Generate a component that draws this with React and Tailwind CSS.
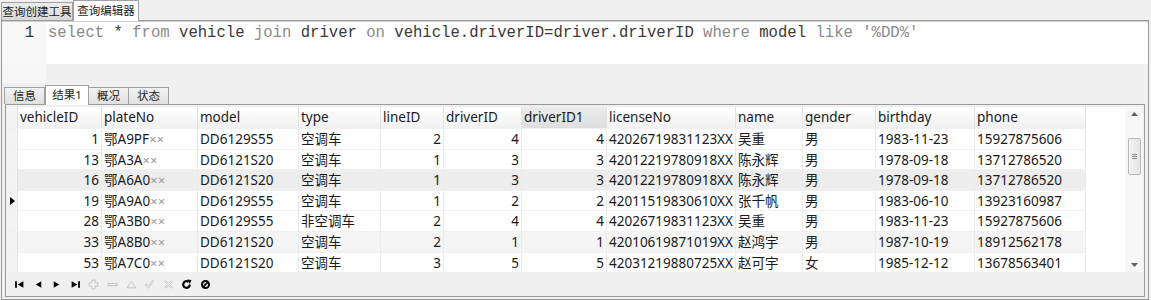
import React from "react";

const cols = [
  { key: "vehicleID", w: 84, right: true },
  { key: "plateNo", w: 96 },
  { key: "model", w: 101 },
  { key: "type", w: 82 },
  { key: "lineID", w: 63, right: true },
  { key: "driverID", w: 78, right: true },
  { key: "driverID1", w: 85, right: true },
  { key: "licenseNo", w: 129 },
  { key: "name", w: 67 },
  { key: "gender", w: 73 },
  { key: "birthday", w: 99 },
  { key: "phone", w: 111 },
];

const rows = [
  ["1", "鄂A9PF", "DD6129S55", "空调车", "2", "4", "4", "42026719831123XX", "吴重", "男", "1983-11-23", "15927875606"],
  ["13", "鄂A3A", "DD6121S20", "空调车", "1", "3", "3", "42012219780918XX", "陈永辉", "男", "1978-09-18", "13712786520"],
  ["16", "鄂A6A0", "DD6121S20", "空调车", "1", "3", "3", "42012219780918XX", "陈永辉", "男", "1978-09-18", "13712786520"],
  ["19", "鄂A9A0", "DD6129S55", "空调车", "1", "2", "2", "42011519830610XX", "张千帆", "男", "1983-06-10", "13923160987"],
  ["28", "鄂A3B0", "DD6129S55", "非空调车", "2", "4", "4", "42026719831123XX", "吴重", "男", "1983-11-23", "15927875606"],
  ["33", "鄂A8B0", "DD6121S20", "空调车", "2", "1", "1", "42010619871019XX", "赵鸿宇", "男", "1987-10-19", "18912562178"],
  ["53", "鄂A7C0", "DD6121S20", "空调车", "3", "5", "5", "42031219880725XX", "赵可宇", "女", "1985-12-12", "13678563401"],
];

const rowBg = ["bg-white", "bg-white", "bg-[#ededed]", "bg-white", "bg-white", "bg-[#f5f5f5]", "bg-white"];

function Ico({ children, cls = "text-black" }) {
  return (
    <svg width="11" height="11" viewBox="0 0 10 10" className={cls}>
      {children}
    </svg>
  );
}

export default function App() {
  const ui = { fontFamily: '"Noto Sans", "Noto Sans CJK SC", sans-serif' };
  const mono = { fontFamily: '"Liberation Mono", "Courier New", monospace' };
  const kw = "text-[#8a8a8a]";
  const id = "text-[#3a3a3a]";
  return (
    <div className="w-[1151px] h-[300px] bg-[#f0f0f0] flex flex-col overflow-hidden" style={ui}>
      {/* top tabs */}
      <div className="h-[20px] flex items-end pl-[1px] shrink-0 relative z-10">
        <div className="h-[18px] w-[72px] border border-b-0 border-[#a0a0a0] bg-gradient-to-b from-[#ececec] to-[#d9d9d9] text-[11.5px] leading-[17px] text-[#222] text-center">
          查询创建工具
        </div>
        <div className="h-[21px] -mb-[1px] w-[66px] border border-b-0 border-[#a0a0a0] bg-white text-[11.5px] leading-[19px] text-[#222] text-center">
          查询编辑器
        </div>
      </div>
      {/* main frame */}
      <div className="ml-[1px] w-[1148px] flex-1 flex flex-col border-l border-r border-b border-[#9a9a9a] border-t">
        {/* editor */}
        <div className="h-[43px] flex flex-col shrink-0 border-t border-[#cfcfcf]">
          <div className="flex-1 flex bg-white">
            <div className="w-[44px] bg-[#f8f8f8] text-right pr-[12px] pt-[1px] text-[15.6px] leading-[20px] text-[#333]" style={mono}>
              1
            </div>
            <div className="pl-[2px] pt-[1px] text-[15.6px] leading-[20px] whitespace-pre" style={mono}>
              <span className={kw}>select</span>
              <span className={id}> * </span>
              <span className={kw}>from</span>
              <span className={id}> vehicle </span>
              <span className={kw}>join</span>
              <span className={id}> driver </span>
              <span className={kw}>on</span>
              <span className={id}> vehicle.driverID=driver.driverID </span>
              <span className={kw}>where</span>
              <span className={id}> model </span>
              <span className={kw}>like</span>
              <span className={kw}> '%DD%'</span>
            </div>
          </div>
        </div>
        <div className="h-[19px] flex shrink-0">
          <div className="w-[44px] bg-[#f6f6f6]"></div>
          <div className="flex-1 bg-[#f0f0f0]"></div>
        </div>
        {/* lower tabs */}
        <div className="h-[21px] flex items-end pl-[2px] shrink-0 relative z-10">
          <div className="h-[17px] w-[41px] border border-b-0 border-[#a0a0a0] bg-gradient-to-b from-[#f2f2f2] to-[#e0e0e0] text-[11.5px] leading-[16px] text-[#222] text-center">
            信息
          </div>
          <div className="h-[20px] -mb-[1px] w-[44px] border border-b-0 border-[#a0a0a0] bg-white text-[11.5px] leading-[18px] text-[#222] text-center">
            结果1
          </div>
          <div className="h-[17px] w-[40px] border border-b-0 border-l-0 border-[#a0a0a0] bg-gradient-to-b from-[#f2f2f2] to-[#e0e0e0] text-[11.5px] leading-[16px] text-[#222] text-center">
            概况
          </div>
          <div className="h-[17px] w-[40px] border border-b-0 border-l-0 border-[#a0a0a0] bg-gradient-to-b from-[#f2f2f2] to-[#e0e0e0] text-[11.5px] leading-[16px] text-[#222] text-center">
            状态
          </div>
        </div>
        {/* grid panel */}
        <div className="mx-[3px] mb-[2px] flex-1 flex flex-col border border-[#9a9a9a] bg-[#f0f0f0]">
          <div className="flex mt-[2px] ml-[1px] mr-[1px]">
            {/* table */}
            <div className="flex flex-col bg-white text-[13.5px] text-[#1a1a1a]">
              {/* header */}
              <div className="flex h-[21px] bg-gradient-to-b from-white to-[#f1f1f1]">
                <div className="w-[11px] border-r border-[#e2e2e2] bg-[#f3f3f3]"></div>
                {cols.map((c) => (
                  <div
                    key={c.key}
                    style={{ width: c.w }}
                    className={
                      "border-r border-[#e2e2e2] pl-[2px] leading-[20px] " +
                      (c.key === "driverID1" ? "bg-gradient-to-b from-[#ececec] to-[#dedede]" : "")
                    }
                  >
                    {c.key}
                  </div>
                ))}
              </div>
              {rows.map((r, i) => (
                <div key={i} className={"flex h-[20.6px] border-t border-[#f0f0f0] " + rowBg[i]}>
                  <div className="w-[11px] border-r border-[#e2e2e2] bg-[#f3f3f3] flex items-center justify-center">
                    {i === 3 && (
                      <svg width="5" height="8" viewBox="0 0 5 8">
                        <polygon points="0,0 5,4 0,8" fill="#000" />
                      </svg>
                    )}
                  </div>
                  {cols.map((c, j) => (
                    <div
                      key={c.key}
                      style={{ width: c.w }}
                      className={
                        "border-r border-[#ebebeb] leading-[20px] whitespace-nowrap overflow-hidden " +
                        (c.right ? "text-right pr-[2px]" : "pl-[2px]")
                      }
                    >
                      {j === 1 ? (
                        <>
                          {r[j]}
                          <span className="text-[#9a9a9a] text-[13px]">××</span>
                        </>
                      ) : (
                        r[j]
                      )}
                    </div>
                  ))}
                </div>
              ))}
            </div>
            <div className="flex-1 bg-white"></div>
            {/* scrollbar */}
            <div className="w-[18px] bg-[#f7f7f7] flex flex-col items-center py-[4px]">
              <svg width="7" height="4" viewBox="0 0 7 4" className="mt-[1px]">
                <polygon points="3.5,0 7,4 0,4" fill="#606060" />
              </svg>
              <div className="mt-[22px] w-[13px] h-[37px] rounded-[2px] border border-[#b8b8b8] bg-gradient-to-r from-[#f4f4f4] to-[#e4e4e4] flex flex-col items-center justify-center gap-[1px]">
                <div className="w-[5px] h-[1px] bg-[#8a8a8a]"></div>
                <div className="w-[5px] h-[1px] bg-[#8a8a8a]"></div>
                <div className="w-[5px] h-[1px] bg-[#8a8a8a]"></div>
              </div>
              <div className="flex-1"></div>
              <svg width="7" height="4" viewBox="0 0 7 4" className="mb-[1px]">
                <polygon points="0,0 7,0 3.5,4" fill="#606060" />
              </svg>
            </div>
          </div>
          {/* nav bar */}
          <div className="flex-1 flex items-center gap-[7.6px] pl-[8px]">
            <Ico>
              <rect x="1" y="2" width="1.6" height="6" fill="currentColor" />
              <polygon points="8.5,2 3.2,5 8.5,8" fill="currentColor" />
            </Ico>
            <Ico>
              <polygon points="7.5,2 2.5,5 7.5,8" fill="currentColor" />
            </Ico>
            <Ico>
              <polygon points="2.5,2 7.5,5 2.5,8" fill="currentColor" />
            </Ico>
            <Ico>
              <polygon points="1.5,2 6.8,5 1.5,8" fill="currentColor" />
              <rect x="7.4" y="2" width="1.6" height="6" fill="currentColor" />
            </Ico>
            <Ico cls="text-[#c4c4c4]">
              <path d="M3.5 1h3v2.5H9v3H6.5V9h-3V6.5H1v-3h2.5z" fill="none" stroke="currentColor" strokeWidth="0.9" />
            </Ico>
            <Ico cls="text-[#c4c4c4]">
              <rect x="1" y="4" width="8" height="2" fill="none" stroke="currentColor" strokeWidth="0.9" />
            </Ico>
            <Ico cls="text-[#c4c4c4]">
              <polygon points="5,2 9,8 1,8" fill="none" stroke="currentColor" strokeWidth="0.9" />
            </Ico>
            <Ico cls="text-[#c4c4c4]">
              <path d="M1 5.5l3 3 5-6.5-1-0.8-4 5.2-2-2z" fill="none" stroke="currentColor" strokeWidth="0.8" />
            </Ico>
            <Ico cls="text-[#c4c4c4]">
              <path d="M1.5 2.5l1-1L5 4l2.5-2.5 1 1L6 5l2.5 2.5-1 1L5 6 2.5 8.5l-1-1L4 5z" fill="none" stroke="currentColor" strokeWidth="0.8" />
            </Ico>
            <Ico>
              <path d="M8 5a3 3 0 1 1-1.2-2.4" fill="none" stroke="currentColor" strokeWidth="2" />
              <polygon points="5.5,0.5 9.5,1 8,4.5" fill="currentColor" />
            </Ico>
            <Ico>
              <circle cx="5" cy="5" r="3.2" fill="none" stroke="currentColor" strokeWidth="1.8" />
              <line x1="3" y1="7" x2="7" y2="3" stroke="currentColor" strokeWidth="1.5" />
            </Ico>
          </div>
        </div>
      </div>
    </div>
  );
}
